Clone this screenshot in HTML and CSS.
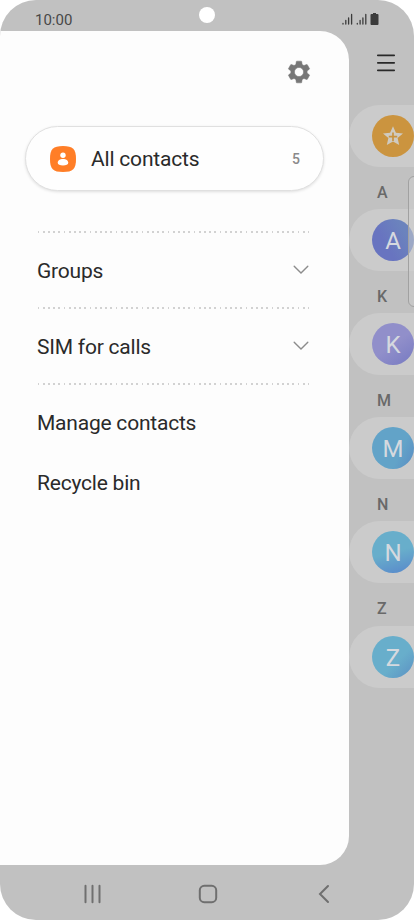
FILE: index.html
```html
<!DOCTYPE html>
<html lang="en">
<head>
<meta charset="utf-8">
<title>Contacts</title>
<link rel="stylesheet" href="styles.css">
</head>
<body>
<div class="phone">
  <header class="status">
    <span class="time">10:00</span>
    <span class="camera"></span>
    <svg class="indicators" width="38" height="14" viewBox="0 0 38 14">
      <g stroke="#3b3b3b" stroke-width="1.3" stroke-linecap="round">
        <path d="M1 12v-.6M3.800 12V8.300M6.600 12V6M9.600 12V2.500"/>
        <path d="M15.300 12v-.6M18.100 12V8.300M20.900 12V6M23.800 12V2.500"/>
      </g>
      <path fill="#3b3b3b" d="M31 1h3v1h1.500q1 0 1 1v9q0 1-1 1h-6q-1 0-1-1V3q0-1 1-1H31z"/>
    </svg>
  </header>

  <div class="content">
    <main class="drawer">
      <button class="settings" aria-label="Settings">
        <svg width="26" height="26" viewBox="0 0 24 24"><path fill="#777" stroke="#777" stroke-width=".5" d="M19.430 12.980c.04-.32.070-.64.070-.98s-.03-.66-.07-.98l2.110-1.650c.19-.15.24-.42.120-.64l-2-3.460c-.12-.22-.39-.3-.61-.22l-2.490 1c-.52-.4-1.080-.73-1.690-.98l-.38-2.650C14.460 2.180 14.250 2 14 2h-4c-.25 0-.46.18-.49.42l-.38 2.650c-.61.25-1.170.59-1.690.98l-2.490-1c-.23-.09-.49 0-.61.22l-2 3.460c-.13.22-.07.49.12.64l2.110 1.650c-.04.32-.07.65-.07.98s.03.66.070.98l-2.110 1.650c-.19.15-.24.42-.12.64l2 3.460c.12.22.39.3.61.22l2.490-1c.52.4 1.080.73 1.690.98l.38 2.650c.03.24.24.42.49.42h4c.25 0 .46-.18.49-.42l.38-2.650c.61-.25 1.170-.59 1.690-.98l2.490 1c.23.09.49 0 .61-.22l2-3.460c.12-.22.070-.49-.12-.64zM12 16.200a4.200 4.200 0 1 1 0-8.400 4.200 4.200 0 0 1 0 8.400z"/></svg>
      </button>
      <div class="selected">
        <svg width="26" height="26" viewBox="0 0 26 26">
          <path fill="#ff7e27" d="M13 0C23 0 26 3 26 13S23 26 13 26 0 23 0 13 3 0 13 0z"/>
          <circle cx="13" cy="9.300" r="2.700" fill="#fff"/>
          <path fill="#fff" d="M7.700 16.800c0-2.300 2.300-3.800 5.300-3.800s5.300 1.500 5.300 3.800c0 1.700-2.200 2.700-5.300 2.700s-5.300-1-5.300-2.700z"/>
        </svg>
        <span class="label">All contacts</span>
        <span class="count">5</span>
      </div>
      <nav class="menu">
        <div class="row ruled">Groups
          <svg class="chevron" width="16" height="10" viewBox="0 0 16 10"><path d="M1.200 1.200 8 8l6.800-6.800"/></svg>
        </div>
        <div class="row ruled">SIM for calls
          <svg class="chevron" width="16" height="10" viewBox="0 0 16 10"><path d="M1.200 1.200 8 8l6.800-6.800"/></svg>
        </div>
        <div class="row ruled">Manage contacts</div>
        <div class="row last">Recycle bin</div>
      </nav>
    </main>

    <aside class="rail">
      <svg class="burger" width="20" height="20" viewBox="0 0 20 20"><path d="M1.800 2.300h16.400M1.800 9.800h16.400M1.800 17.300h16.400"/></svg>
      <div class="contact"><span class="avatar fav">
        <svg width="22" height="22" viewBox="0 0 22 22">
          <path fill="#cfcac0" d="m11 1.200 2.900 6.500 7.100.7-5.400 4.700 1.600 7-6.200-3.700-6.200 3.700 1.600-7L1 8.400l7.100-.7z"/>
          <path stroke="#c9933f" stroke-width="1.700" d="M11 7.500v8.400M6.800 11.700h8.400"/>
        </svg></span></div>
      <div class="letter">A</div>
      <div class="contact"><span class="avatar a">A</span></div>
      <div class="letter">K</div>
      <div class="contact"><span class="avatar k">K</span></div>
      <div class="letter">M</div>
      <div class="contact"><span class="avatar m">M</span></div>
      <div class="letter">N</div>
      <div class="contact"><span class="avatar n">N</span></div>
      <div class="letter">Z</div>
      <div class="contact"><span class="avatar z">Z</span></div>
      <span class="edge-handle"></span>
    </aside>
  </div>

  <footer class="navbar">
    <svg width="18" height="20" viewBox="0 0 18 20"><path d="M1.500 1.800v16.400M8.500 1.800v16.400M15.500 1.800v16.400"/></svg>
    <svg width="20" height="20" viewBox="0 0 20 20"><rect x="1.800" y="1.800" width="16.400" height="16.400" rx="4.500"/></svg>
    <svg width="12" height="20" viewBox="0 0 12 20"><path d="M10 2 2 10l8 8"/></svg>
  </footer>
</div>
</body>
</html>
```
FILE: styles.css
```css
* { box-sizing: border-box; }
body {
  margin: 0;
  background: #fff;
  font-family: Roboto, "Liberation Sans", sans-serif;
}
.phone {
  display: flex;
  flex-direction: column;
  width: 414px;
  height: 920px;
  overflow: hidden;
  border-radius: 36px;
  background: #c1c1c1;
}
.status {
  display: grid;
  grid-template-columns: 199px 16px 1fr;
  height: 31px;
  flex: none;
}
.time {
  padding: 11px 0 0 35px;
  font-size: 15px;
  line-height: 18px;
  color: #484848;
}
.camera {
  width: 16px;
  height: 16px;
  margin-top: 7px;
  border-radius: 50%;
  background: #fff;
}
.indicators {
  justify-self: end;
  margin: 12px 34px 0 0;
}
.content {
  display: flex;
  height: 834px;
  flex: none;
}
.drawer {
  display: flex;
  flex-direction: column;
  width: 349px;
  flex: none;
  border-radius: 0 29px 29px 0;
  background: #fdfdfd;
}
.settings {
  align-self: flex-end;
  width: 26px;
  height: 26px;
  margin: 28px 37.500px 0 0;
  padding: 0;
  border: 0;
  background: none;
}
.settings svg { display: block; }
.selected {
  display: flex;
  align-items: center;
  height: 65px;
  margin: 41px 25px 0;
  padding: 0 23px 0 24px;
  border: 1px solid #e0e0e0;
  border-radius: 33px;
  background: #fefefe;
  box-shadow: 0 1px 3px rgba(0, 0, 0, .12);
}
.label {
  flex: 1;
  padding-top: 1px;
  margin-left: 15px;
  font-size: 21px;
  letter-spacing: -.2px;
  color: #2a2a2a;
}
.count {
  padding-top: 1px;
  font-size: 14px;
  font-weight: 500;
  color: #8a8a8a;
}
.menu { margin: 40px 40px 0 37px; }
.row {
  display: flex;
  align-items: center;
  justify-content: space-between;
  height: 76px;
  padding-top: 3px;
  font-size: 21px;
  letter-spacing: -.22px;
  color: #2a2a2a;
}
.ruled {
  background: repeating-linear-gradient(90deg, transparent 0 .6px, #d2d2d2 .6px 2.400px, transparent 2.400px 5.200px) 0 0 / 100% 2px no-repeat;
}
.last { height: 44px; }
.chevron {
  margin-bottom: 2px;
  fill: none;
  stroke: #8c8c8c;
  stroke-width: 1.400;
  stroke-linecap: round;
}
.rail {
  position: relative;
  width: 65px;
}
.burger {
  display: block;
  margin: 22px 0 31.600px 27px;
  fill: none;
  stroke: #292929;
  stroke-width: 1.700;
  stroke-linecap: round;
}
.contact {
  display: flex;
  align-items: center;
  height: 62px;
  padding-left: 23px;
  border-radius: 31px 0 0 31px;
  background: #cbcbcb;
}
.avatar {
  display: flex;
  align-items: center;
  justify-content: center;
  width: 42px;
  height: 42px;
  flex: none;
  padding-top: 2px;
  border-radius: 50%;
  font-size: 24px;
  color: #d5d9df;
}
.fav { padding-top: 0; background: #cb943f; }
.a { background: linear-gradient(60deg, #6874c0 35%, #6b83bd 75%); }
.k { background: linear-gradient(145deg, #918fca 50%, #7e80c4 85%); }
.m { background: linear-gradient(115deg, #62a3c8 65%, #5b8fc4 95%); }
.n { background: linear-gradient(165deg, #68aecb 50%, #5b8fcb 90%); }
.z { background: linear-gradient(135deg, #68aecb 60%, #609bc6 85%); }
.letter {
  height: 42.200px;
  padding-left: 28px;
  font-size: 16px;
  font-weight: 500;
  line-height: 52px;
  color: #696969;
}
.edge-handle {
  position: absolute;
  top: 145px;
  left: 59px;
  width: 12px;
  height: 131px;
  border: 1px solid #a1a1a1;
  border-radius: 6px;
  background: rgba(208, 208, 208, .5);
}
.navbar {
  display: flex;
  align-items: center;
  height: 55px;
  flex: none;
  padding: 3px 0 0 84px;
}
.navbar svg {
  fill: none;
  stroke: #6f6f6f;
  stroke-width: 2;
  stroke-linecap: round;
}
.navbar svg:nth-child(2) { margin-left: 96px; }
.navbar svg:nth-child(3) { margin-left: 100px; }
```
